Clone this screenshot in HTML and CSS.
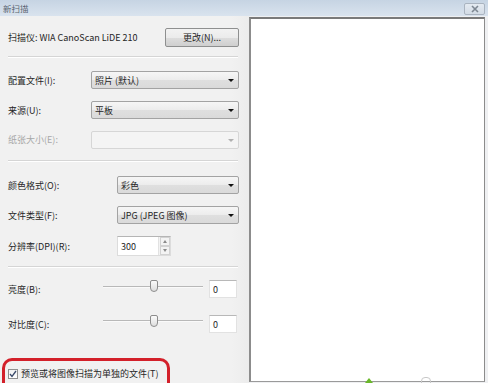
FILE: index.html
```html
<!DOCTYPE html>
<html lang="zh-CN">
<head>
<meta charset="utf-8">
<link rel="stylesheet" href="styles.css">
</head>
<body>
<div class="window">
  <div class="titlebar">
    <span class="title">新扫描</span>
    <span class="close"><svg width="10" height="8" viewBox="0 0 10 8"><path d="M2 1 L8 7 M8 1 L2 7" stroke="#7d8792" stroke-width="1.6" fill="none"/></svg></span>
  </div>
  <div class="main">
    <div class="left">
      <div class="row scanner">
        <span class="lbl-free">扫描仪: WIA CanoScan LiDE 210</span>
        <span class="btn">更改(N)...</span>
      </div>
      <div class="sep s1"></div>

      <div class="row r-a first"><span class="lbl w83">配置文件(I):</span><span class="select">照片 (默认)<i class="arrow"></i></span></div>
      <div class="row r-b"><span class="lbl w83">来源(U):</span><span class="select">平板<i class="arrow"></i></span></div>
      <div class="row r-c"><span class="lbl w83 dis">纸张大小(E):</span><span class="select disabled"><i class="arrow"></i></span></div>
      <div class="sep s2"></div>

      <div class="row r-d"><span class="lbl w109">颜色格式(O):</span><span class="select">彩色<i class="arrow"></i></span></div>
      <div class="row r-e"><span class="lbl w109">文件类型(F):</span><span class="select">JPG (JPEG 图像)<i class="arrow"></i></span></div>
      <div class="row r-f"><span class="lbl w109">分辨率(DPI)(R):</span>
        <span class="spin"><span class="spin-val">300</span><span class="spin-btns"><i class="up"></i><i class="down"></i></span></span>
      </div>
      <div class="sep s3"></div>

      <div class="row r-g"><span class="lbl w95">亮度(B):</span><span class="slider"><span class="track"></span><span class="thumb"></span></span><span class="num">0</span></div>
      <div class="row r-h"><span class="lbl w95">对比度(C):</span><span class="slider"><span class="track"></span><span class="thumb"></span></span><span class="num">0</span></div>

      <div class="highlight">
        <span class="check"><svg width="8" height="8" viewBox="0 0 8 8"><path d="M1 4 L3 6.5 L7 1" stroke="#3a4a6a" stroke-width="1.3" fill="none"/></svg></span>
        <span class="check-text">预览或将图像扫描为单独的文件(T)</span>
      </div>
    </div>
    <div class="preview">
      <span class="mark-green"></span>
      <span class="mark-gray"></span>
    </div>
  </div>
</div>
</body>
</html>
```
FILE: styles.css
```css
html, body {
  margin: 0;
  padding: 0;
  background: #f0f0f0;
}
body {
  font-family: "Noto Sans CJK SC", "Noto Sans", sans-serif;
  font-size: 9px;
  color: #262626;
}
.window {
  width: 488px;
  height: 383px;
  display: flex;
  flex-direction: column;
  overflow: hidden;
  background: #eff0f2;
}
.titlebar {
  height: 16px;
  flex: none;
  display: flex;
  align-items: center;
  justify-content: space-between;
  padding: 0 3px 0 3px;
  background: linear-gradient(#c6d4e3, #d9e3ee);
}
.title {
  color: #5a6470;
  font-size: 8.5px;
  line-height: 16px;
}
.close {
  width: 21px;
  height: 12px;
  margin-top: 2px;
  border: 1px solid #aab4c0;
  border-radius: 2px;
  background: linear-gradient(#e4eaf1, #d3dce6);
  display: flex;
  align-items: center;
  justify-content: center;
  box-sizing: border-box;
}
.main {
  flex: 1;
  display: flex;
  min-height: 0;
}
.left {
  width: 230px;
  padding: 0 11px 0 8px;
  display: flex;
  flex-direction: column;
  background: linear-gradient(90deg, #f1f1f1, #f1f1f1 232px, #ececec);
}
.row {
  display: flex;
  align-items: center;
  flex: none;
}
.lbl { flex: none; white-space: nowrap; }
.w83 { width: 83px; }
.w109 { width: 109px; }
.w95 { width: 95px; }
.dis { color: #a8a8a8; }
.lbl-free { flex: 1; white-space: nowrap; }

.scanner { margin-top: 12px; height: 19px; }
.btn {
  width: 74px;
  height: 19px;
  box-sizing: border-box;
  border: 1px solid #8e8f8f;
  border-radius: 2px;
  background: linear-gradient(#f2f2f2, #ebebeb 50%, #dddddd 51%, #cfcfcf);
  display: flex;
  align-items: center;
  justify-content: center;
  margin-right: -1px;
}
.sep {
  height: 1px;
  flex: none;
  background: #d5d5d5;
  border-bottom: 1px solid #ffffff;
}
.s1 { margin-top: 9px; }
.s2 { margin-top: 11px; }
.s3 { margin-top: 10px; }

.select {
  flex: 1;
  height: 18px;
  box-sizing: border-box;
  border: 1px solid #a3a3a3;
  border-radius: 2px;
  background: linear-gradient(#f6f6f6, #ececec 50%, #dfdfdf 51%, #dadada);
  display: flex;
  align-items: center;
  padding-left: 3px;
  position: relative;
  margin-right: -1px;
}
.select .arrow {
  position: absolute;
  right: 4px;
  top: 7px;
  width: 0;
  height: 0;
  border-left: 3px solid transparent;
  border-right: 3px solid transparent;
  border-top: 3px solid #111;
}
.select.disabled {
  background: #f4f4f4;
  border-color: #d6d6d6;
}
.select.disabled .arrow { border-top-color: #b0b0b0; }

.first { margin-top: 13px; }
.r-b { margin-top: 12px; }
.r-c { margin-top: 11px; height: 19px; }
.r-d { margin-top: 14px; }
.r-e { margin-top: 12px; }
.r-f { margin-top: 12px; }
.r-g { margin-top: 12px; }
.r-h { margin-top: 17px; }

.spin {
  width: 54px;
  height: 20px;
  display: flex;
  box-sizing: border-box;
  border: 1px solid #dcdcdc;
  border-top-color: #b5b5b5;
  background: #fff;
}
.spin-val {
  flex: 1;
  padding-left: 3px;
  display: flex;
  align-items: center;
}
.spin-btns {
  width: 11px;
  display: flex;
  flex-direction: column;
  border-left: 1px solid #e2e2e2;
  background: #f3f3f3;
}
.spin-btns i {
  flex: 1;
  position: relative;
  border: 1px solid #d2d2d2;
  margin: 0 0 0 1px;
}
.spin-btns i::after {
  content: "";
  position: absolute;
  left: 2px;
  top: 2px;
  border-left: 2px solid transparent;
  border-right: 2px solid transparent;
}
.spin-btns .up::after { border-bottom: 3px solid #8a8a8a; }
.spin-btns .down::after { border-top: 3px solid #8a8a8a; }

.slider {
  width: 100px;
  height: 18px;
  position: relative;
  flex: none;
}
.track {
  position: absolute;
  left: 0;
  right: 0;
  top: 6px;
  height: 1px;
  background: #b8b8b8;
  border-bottom: 1px solid #fafafa;
}
.thumb {
  position: absolute;
  left: 47px;
  top: 0;
  width: 8px;
  height: 12px;
  box-sizing: border-box;
  border: 1px solid #8d8d8d;
  border-radius: 2px 2px 4px 4px;
  background: linear-gradient(#fbfbfb, #dedede);
}
.r-h .slider .track { top: 5px; }
.num {
  margin-left: 6px;
  width: 28px;
  height: 18px;
  box-sizing: border-box;
  background: #fff;
  border: 1px solid #e2e2e2;
  border-top-color: #b8b8b8;
  display: flex;
  align-items: center;
  padding-left: 3px;
}

.highlight {
  margin-top: 25px;
  margin-left: -6px;
  width: 168px;
  flex: 1;
  box-sizing: border-box;
  border: 3px solid #d3202a;
  border-bottom: none;
  border-radius: 10px 10px 0 0;
  display: flex;
  align-items: flex-start;
  padding: 7px 0 0 3px;
}
.check {
  width: 10px;
  height: 10px;
  box-sizing: border-box;
  border: 1px solid #8f8f8f;
  background: linear-gradient(#f2f2f2, #ffffff);
  display: flex;
  align-items: center;
  justify-content: center;
  margin-top: 1px;
}
.check-text {
  margin-left: 3px;
  line-height: 12px;
  white-space: nowrap;
}

.preview {
  width: 236px;
  margin-top: 1px;
  margin-bottom: 1px;
  box-sizing: border-box;
  background: #fff;
  border: 2px solid #8c8c8c;
  border-top-color: #7a7a7a;
  border-right: 1px solid #8c8c8c;
  border-bottom: 1px solid #9a9a9a;
  position: relative;
}
.mark-green {
  position: absolute;
  left: 114px;
  bottom: -2px;
  width: 0;
  height: 0;
  border-left: 4px solid transparent;
  border-right: 4px solid transparent;
  border-bottom: 5px solid #6ab82a;
}
.mark-gray {
  position: absolute;
  left: 170px;
  bottom: -3px;
  width: 8px;
  height: 5px;
  border: 1px solid #c8c8c8;
  border-radius: 4px 4px 0 0;
}
```
